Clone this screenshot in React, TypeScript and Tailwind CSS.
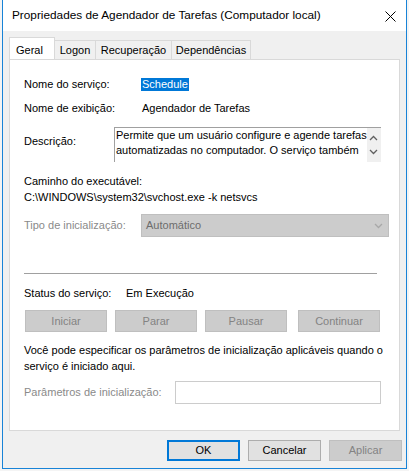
import React from 'react';

const ui = { fontFamily: '"Liberation Sans", Arial, sans-serif' };

function Chevron({ dir, className }: { dir: 'up' | 'down'; className?: string }) {
  return (
    <svg width="9" height="6" viewBox="0 0 9 6" className={className}>
      <path
        d={dir === 'up' ? 'M1 5 L4.5 1.5 L8 5' : 'M1 1 L4.5 4.5 L8 1'}
        fill="none"
        stroke="currentColor"
        strokeWidth="1.3"
      />
    </svg>
  );
}

function Tab({ label, active, w }: { label: string; active?: boolean; w: string }) {
  if (active) {
    return (
      <div className={`${w} h-[22px] -mb-px bg-white border border-b-0 border-[#d9d9d9] flex items-start pt-[4px] pl-[6px] text-[11px] text-black z-10`}>
        {label}
      </div>
    );
  }
  return (
    <div className={`${w} h-[19px] mt-[3px] bg-[#f0f0f0] border border-l-0 border-b-0 border-[#d9d9d9] flex items-center justify-center text-[11px] text-black`}>
      {label}
    </div>
  );
}

function GreyBtn({ label, className }: { label: string; className?: string }) {
  return (
    <div className={`w-[82px] h-[22px] bg-[#cccccc] border border-[#bfbfbf] flex items-center justify-center text-[#838383] ${className ?? ''}`}>
      {label}
    </div>
  );
}

export default function App() {
  return (
    <div className="w-[409px] h-[471px] bg-[#f4f4f4] overflow-hidden" style={ui}>
      <div className="ml-[2px] w-[405px] h-[469px] border-x border-b border-[#1883d7] flex flex-col bg-[#f0f0f0]">
        {/* barra de titulo */}
        <div className="h-[31px] bg-white flex items-center justify-between pl-[9px] pr-[10px]">
          <span className="text-[11.8px] text-black whitespace-nowrap">
            Propriedades de Agendador de Tarefas (Computador local)
          </span>
          <svg width="11" height="11" viewBox="0 0 11 11" className="mt-[2px]">
            <path d="M0.5 0.5 L10.5 10.5 M10.5 0.5 L0.5 10.5" stroke="#000" strokeWidth="1" />
          </svg>
        </div>

        <div className="flex-1 flex flex-col pl-[6px] pt-[6px]">
          {/* abas */}
          <div className="flex items-start">
            <Tab label="Geral" active w="w-[46px]" />
            <Tab label="Logon" w="w-[41px]" />
            <Tab label="Recuperação" w="w-[76px]" />
            <Tab label="Dependências" w="w-[79px]" />
          </div>

          {/* painel */}
          <div className="w-[391px] h-[372px] bg-white border border-[#d9d9d9] flex flex-col pl-[14px] text-[11px] text-black whitespace-nowrap">
            <div className="mt-[16px] h-[16px] flex items-center">
              <span className="w-[117px]">Nome do serviço:</span>
              <span className="bg-[#0078d7] text-white px-[1px] leading-[13px]">Schedule</span>
            </div>
            <div className="mt-[8px] h-[16px] flex items-center">
              <span className="w-[118px]">Nome de exibição:</span>
              <span>Agendador de Tarefas</span>
            </div>

            <div className="mt-[11px] flex items-start">
              <span className="w-[90px] pt-[6px]">Descrição:</span>
              <div className="w-[267px] h-[35px] border-t border-l border-[#a0a0a0] flex">
                <div className="flex-1 pl-[1px] leading-[15px]">
                  Permite que um usuário configure e agende tarefas
                  <br />
                  automatizadas no computador. O serviço também
                </div>
                <div className="w-[16px] bg-[#f0f0f0] flex flex-col items-center justify-around text-[#606060] py-[3px]">
                  <Chevron dir="up" />
                  <Chevron dir="down" />
                </div>
              </div>
            </div>

            <div className="mt-[11px] h-[16px] flex items-center">Caminho do executável:</div>
            <div className="h-[16px] flex items-center">C:\WINDOWS\system32\svchost.exe -k netsvcs</div>

            <div className="mt-[9px] flex items-center">
              <span className="w-[117px] text-[#8a8a8a]">Tipo de inicialização:</span>
              <div className="w-[248px] h-[23px] bg-[#cccccc] border border-[#bfbfbf] flex items-center justify-between pl-[4px] pr-[5px] text-[#6d6d6d]">
                <span>Automático</span>
                <Chevron dir="down" className="text-[#a8a8a8]" />
              </div>
            </div>

            <div className="mt-[36px] w-[353px] h-px bg-[#a0a0a0]" />

            <div className="mt-[11px] h-[16px] flex items-center">
              <span className="w-[102px]">Status do serviço:</span>
              <span>Em Execução</span>
            </div>

            <div className="mt-[9px] flex pl-[1px]">
              <GreyBtn label="Iniciar" />
              <GreyBtn label="Parar" className="ml-[8px]" />
              <GreyBtn label="Pausar" className="ml-[8px]" />
              <GreyBtn label="Continuar" className="ml-[11px]" />
            </div>

            <div className="mt-[10px] leading-[16px]">
              Você pode especificar os parâmetros de inicialização aplicáveis quando o
              <br />
              serviço é iniciado aqui.
            </div>

            <div className="mt-[7px] flex items-center">
              <span className="w-[151px] text-[#8a8a8a]">Parâmetros de inicialização:</span>
              <div className="w-[206px] h-[23px] bg-white border border-[#cccccc]" />
            </div>
          </div>

          {/* botoes */}
          <div className="mt-[9px] flex justify-end pr-[4px] text-[11px]">
            <div className="w-[73px] h-[21px] bg-[#e1e1e1] border-2 border-[#0078d7] flex items-center justify-center text-black">
              OK
            </div>
            <div className="ml-[8px] w-[73px] h-[21px] bg-[#e1e1e1] border border-[#adadad] flex items-center justify-center text-black">
              Cancelar
            </div>
            <div className="ml-[8px] w-[73px] h-[21px] bg-[#cccccc] border border-[#bfbfbf] flex items-center justify-center text-[#838383]">
              Aplicar
            </div>
          </div>
        </div>
      </div>
    </div>
  );
}
